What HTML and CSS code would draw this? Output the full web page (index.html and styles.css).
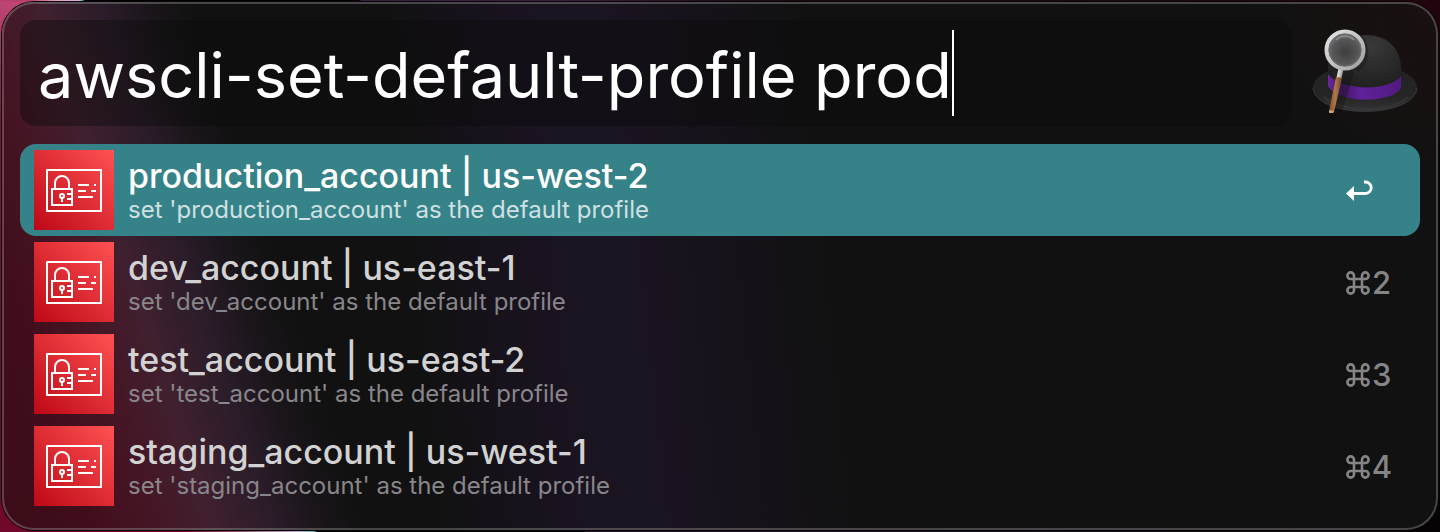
FILE: index.html
```
<!DOCTYPE html>
<html lang="en">
<head>
<meta charset="utf-8">
<title>awscli-set-default-profile</title>
<link rel="stylesheet" href="styles.css">
</head>
<body>
<svg class="defs" aria-hidden="true">
  <defs>
    <linearGradient id="red" x1="0" y1="1" x2="1" y2="0"><stop offset="0" stop-color="#bd0816"/><stop offset="1" stop-color="#ff5252"/></linearGradient>
    <symbol id="aws" viewBox="0 0 80 80">
      <path fill="url(#red)" d="M0 0h80v80H0z"/>
      <g fill="none" stroke="#fff" stroke-width="2">
        <path stroke-linejoin="round" d="M13 20h54v41H13z"/>
        <path d="M18 39h20v16H18zM21 39v-6a7 7 0 0 1 14 0v6M33 44h5M33 49h5M44 35h11M60 35h2M44 41h8M57 41h5M44 47h15M28 48v4"/>
        <circle cx="28" cy="46" r="2"/>
      </g>
    </symbol>
    <symbol id="cmd" viewBox="0 0 24 24">
      <path fill="none" stroke="currentColor" stroke-width="2.600" d="M8 8v8M16 8v8M8 8h8M8 16h8M8 8H4.700A3.300 3.300 0 1 1 8 4.700zM16 8V4.700A3.300 3.300 0 1 1 19.300 8zM8 16v3.300A3.300 3.300 0 1 1 4.700 16zM16 16h3.300A3.300 3.300 0 1 1 16 19.300z"/>
    </symbol>
  </defs>
</svg>
<main class="panel">
  <div class="top">
    <label class="search">
      <input class="query" type="text" aria-label="Search" value="awscli-set-default-profile prod" spellcheck="false">
      <span class="caret"></span>
    </label>
    <svg class="hat" viewBox="0 0 106 88" role="img" aria-label="Hat and magnifying glass">
      <defs>
        <radialGradient id="crown" cx=".58" cy=".18" r=".75"><stop offset="0" stop-color="#3a3a3a"/><stop offset=".6" stop-color="#292829"/><stop offset="1" stop-color="#1f1e1f"/></radialGradient>
        <linearGradient id="brim" x1="0" y1="0" x2="0" y2="1"><stop offset="0" stop-color="#222122"/><stop offset=".7" stop-color="#272627"/><stop offset="1" stop-color="#333234"/></linearGradient>
        <linearGradient id="band"><stop offset="0" stop-color="#6a289e"/><stop offset=".2" stop-color="#44166a"/><stop offset=".45" stop-color="#60219a"/><stop offset="1" stop-color="#501b80"/></linearGradient>
        <radialGradient id="lens" cx=".52" cy=".55" r=".6"><stop offset="0" stop-color="#3d3d3e"/><stop offset=".6" stop-color="#58585a"/><stop offset="1" stop-color="#858587"/></radialGradient>
        <linearGradient id="rim" x1="0" y1="0" x2="1" y2="1"><stop offset="0" stop-color="#e4e4e4"/><stop offset=".5" stop-color="#c4c4c4"/><stop offset="1" stop-color="#9c9c9c"/></linearGradient>
        <linearGradient id="wood"><stop offset="0" stop-color="#7e4f2d"/><stop offset=".5" stop-color="#b07848"/><stop offset="1" stop-color="#70452a"/></linearGradient>
      </defs>
      <ellipse cx="53" cy="59" rx="52" ry="24" fill="url(#brim)"/>
      <path fill="none" stroke="#39383a" d="M1 59c2 14 22 23 52 23s50-9 52-23"/>
      <path fill="none" stroke="#3a393c" stroke-width="2" opacity=".6" d="M12 68c16 16 68 16 84 0"/>
      <path fill="url(#crown)" d="M16 56V37C16 18 34 6 54 6s34 12 35 32v18c-10 14-60 16-73 0z"/>
      <path fill="url(#band)" d="M16 45c12 17 62 18 73 2v12c-10 16-62 16-73-2z"/>
      <path fill="#111" opacity=".35" d="M33 36l9 7-12 40-8-2z"/>
      <path fill="none" stroke="#111" stroke-width="6" opacity=".35" d="M44 6c12 7 13 27 0 34"/>
      <path stroke="url(#rim)" stroke-width="5" d="M29 40l-2 9"/>
      <path fill="url(#wood)" d="M24 48l6 1-8 34c-1 2-5 1-5-1z"/>
      <path fill="#c5a68a" d="M17 81l5 1-1 2h-4z"/>
      <circle cx="33" cy="21" r="18.500" fill="url(#lens)" stroke="url(#rim)" stroke-width="4"/>
      <circle cx="33" cy="21" r="16" fill="none" stroke="#6a6a6b"/>
      <path fill="none" stroke="#aaa" stroke-width="2" opacity=".5" d="M24 11c5-5 13-5 18 0"/>
    </svg>
  </div>
  <div class="results">
    <button class="row selected">
      <svg class="icon" aria-hidden="true"><use href="#aws"/></svg>
      <span class="text"><span class="title">production_account | us-west-2</span><span class="sub">set 'production_account' as the default profile</span></span>
      <span class="key"><svg class="enter" viewBox="0 0 28 24" role="img" aria-label="Return"><path fill="none" stroke="currentColor" stroke-width="2.800" d="M18 3h1.500a5.750 5.750 0 0 1 0 11.500H6"/><path fill="currentColor" d="M0 14.500l8-7.500v15z"/></svg></span>
    </button>
    <button class="row">
      <svg class="icon" aria-hidden="true"><use href="#aws"/></svg>
      <span class="text"><span class="title">dev_account | us-east-1</span><span class="sub">set 'dev_account' as the default profile</span></span>
      <span class="key"><svg class="cmd" role="img" aria-label="Command"><use href="#cmd"/></svg>2</span>
    </button>
    <button class="row">
      <svg class="icon" aria-hidden="true"><use href="#aws"/></svg>
      <span class="text"><span class="title">test_account | us-east-2</span><span class="sub">set 'test_account' as the default profile</span></span>
      <span class="key"><svg class="cmd" role="img" aria-label="Command"><use href="#cmd"/></svg>3</span>
    </button>
    <button class="row">
      <svg class="icon" aria-hidden="true"><use href="#aws"/></svg>
      <span class="text"><span class="title">staging_account | us-west-1</span><span class="sub">set 'staging_account' as the default profile</span></span>
      <span class="key"><svg class="cmd" role="img" aria-label="Command"><use href="#cmd"/></svg>4</span>
    </button>
  </div>
</main>
</body>
</html>
```
FILE: styles.css
```
* { box-sizing: border-box; }
body {
  margin: 0;
  padding: 2px;
  font-family: Inter, "Liberation Sans", sans-serif;
  background:
    linear-gradient(90deg, #b8406f 0 30px, #e09abf 55px, #d8b4dc 78px, #58b8b8 82px, #000 85px 360px, #34203f 361px 560px, #16080e 800px, #20040c) top / 100% 2px no-repeat,
    linear-gradient(90deg, #70092c 0 180px, #9c4060 230px, #b8b0d0 300px, #58b8b8 314px, #000 317px 584px, #1d1428 585px 800px, #080506) bottom / 100% 2px no-repeat,
    linear-gradient(#c04878, #a83058 50px, #8c1038 120px, #700828) left / 40px 100% no-repeat,
    linear-gradient(#22040e, #0a0206 150px, #050304) right / 40px 100% no-repeat,
    #000;
}
.defs { position: absolute; width: 0; height: 0; }
.panel {
  padding: 16px;
  border: 2px solid rgba(145, 145, 145, .42);
  border-radius: 32px;
  box-shadow: 0 0 0 1px #0c0508;
  background:
    radial-gradient(circle at 100% 0, rgba(32, 16, 16, .6), transparent 180px),
    linear-gradient(72deg, #3b0c17 0, #420e1c 90px, #451625 150px, #40202f 200px, #2a1c29 260px, #191519 305px, #111 345px, transparent 450px),
    linear-gradient(84deg, #111 430px, #17121c 520px, #1a1320 580px, #1a1320 660px, #151219 760px, #111 860px);
  background-origin: border-box;
}
.top { display: flex; align-items: center; margin-bottom: 18px; }
.search {
  flex: 1;
  display: flex;
  align-items: center;
  min-width: 0;
  height: 106px;
  padding-left: 18px;
  border-radius: 16px;
  background: rgba(9, 9, 9, .4);
}
.query {
  field-sizing: content;
  padding: 4px 0 0;
  border: 0;
  outline: 0;
  background: none;
  color: #fff;
  font: 400 63px/82px Inter, "Liberation Sans", sans-serif;
}
.caret { width: 2px; height: 86px; background: #fff; }
.hat { width: 106px; height: 88px; margin: 0 2px 0 20px; }
.results { display: flex; flex-direction: column; }
.row {
  display: flex;
  align-items: center;
  gap: 14px;
  width: 100%;
  padding: 6px 28px 6px 14px;
  border: 0;
  border-radius: 16px;
  background: none;
  color: #d2d2d2;
  font: 400 34px/40px Inter, "Liberation Sans", sans-serif;
  text-align: left;
}
.icon { flex: none; width: 80px; height: 80px; }
.text { flex: 1; display: flex; flex-direction: column; }
.title { font-weight: 500; }
.sub { color: #88868a; font-size: 24px; line-height: 28px; }
.key { display: flex; align-items: center; gap: 2px; min-width: 46px; padding-top: 2px; color: #858585; font-size: 31px; font-weight: 500; }
.cmd { width: 24px; height: 24px; }
.enter { width: 28px; height: 24px; }
.selected { background: #358288; color: #fff; }
.selected .sub { color: #d0e0e2; }
.selected .key { color: #fff; }
```
